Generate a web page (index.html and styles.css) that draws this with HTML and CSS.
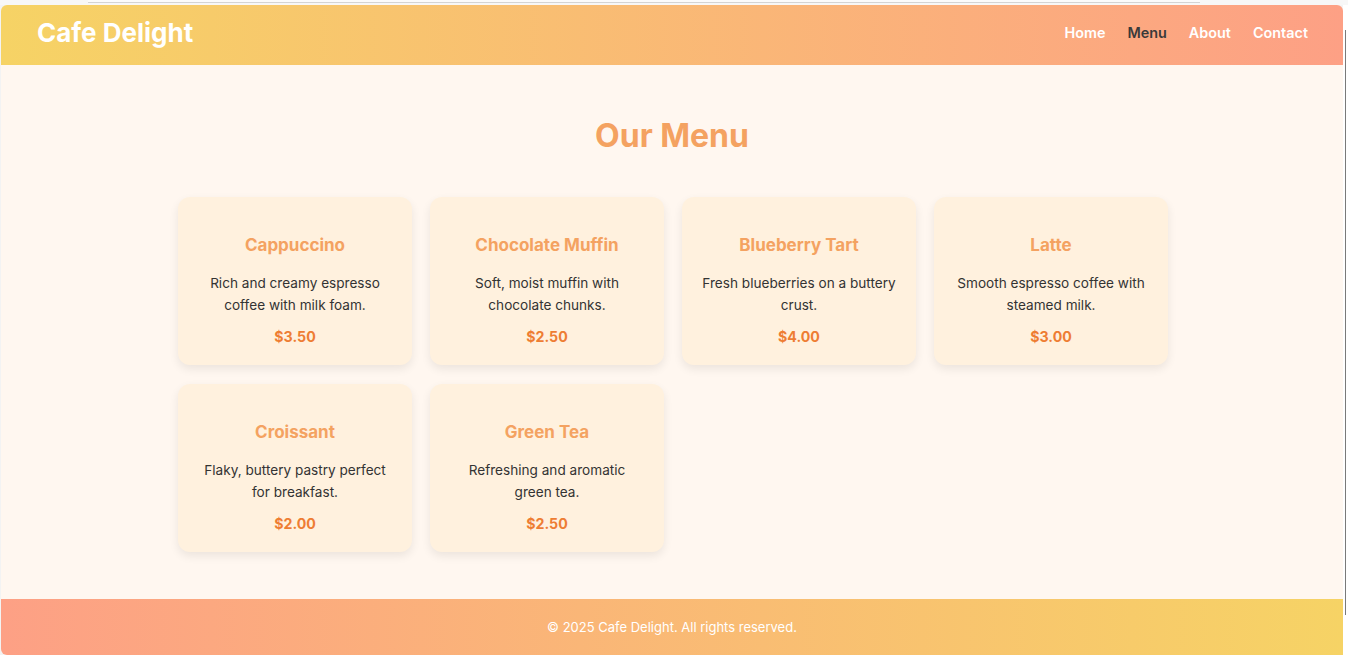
FILE: index.html
```html
<!DOCTYPE html>
<html lang="en">
<head>
<meta charset="utf-8">
<title>Cafe Delight</title>
<link rel="stylesheet" href="styles.css">
</head>
<body>
<div class="chrome">
  <div class="tab"></div>
</div>
<div class="window">
  <div class="frame">
    <header class="site-header">
      <div class="logo">Cafe Delight</div>
      <nav class="nav">
        <a href="#" class="nav-link">Home</a>
        <a href="#" class="nav-link active">Menu</a>
        <a href="#" class="nav-link">About</a>
        <a href="#" class="nav-link">Contact</a>
      </nav>
    </header>
    <main class="content">
      <h2 class="page-title">Our Menu</h2>
      <div class="menu-grid">
        <div class="card">
          <h3 class="card-title">Cappuccino</h3>
          <p class="card-desc">Rich and creamy espresso coffee with milk foam.</p>
          <div class="price">$3.50</div>
        </div>
        <div class="card">
          <h3 class="card-title">Chocolate Muffin</h3>
          <p class="card-desc">Soft, moist muffin with chocolate chunks.</p>
          <div class="price">$2.50</div>
        </div>
        <div class="card">
          <h3 class="card-title">Blueberry Tart</h3>
          <p class="card-desc">Fresh blueberries on a buttery crust.</p>
          <div class="price">$4.00</div>
        </div>
        <div class="card">
          <h3 class="card-title">Latte</h3>
          <p class="card-desc">Smooth espresso coffee with steamed milk.</p>
          <div class="price">$3.00</div>
        </div>
        <div class="card">
          <h3 class="card-title">Croissant</h3>
          <p class="card-desc">Flaky, buttery pastry perfect for breakfast.</p>
          <div class="price">$2.00</div>
        </div>
        <div class="card">
          <h3 class="card-title">Green Tea</h3>
          <p class="card-desc">Refreshing and aromatic green tea.</p>
          <div class="price">$2.50</div>
        </div>
      </div>
    </main>
    <footer class="site-footer">© 2025 Cafe Delight. All rights reserved.</footer>
  </div>
  <div class="scroll-edge"></div>
</div>
</body>
</html>
```

FILE: styles.css
```css
* { box-sizing: border-box; }
html, body { margin: 0; padding: 0; }
body {
  width: 1348px;
  height: 655px;
  overflow: hidden;
  background: #ffffff;
  font-family: Inter, "Noto Sans", sans-serif;
  display: flex;
  flex-direction: column;
}
.chrome {
  height: 5px;
  flex: none;
  background: #f7f7f7;
  position: relative;
}
.tab {
  position: absolute;
  left: 88px;
  top: 0;
  width: 1112px;
  height: 3px;
  border-bottom: 1px solid #d4d4d4;
  background: #fbfbfb;
}
.window {
  flex: 1;
  display: flex;
  padding-left: 1px;
  background: #f3f3f3;
}
.frame {
  width: 1342px;
  height: 650px;
  display: flex;
  flex-direction: column;
  border-radius: 6px 6px 0 6px;
  overflow: hidden;
  background: #fff7f0;
}
.scroll-edge {
  width: 5px;
  background: #ffffff;
  border-left: 2px solid #ffffff;
  position: relative;
}
.scroll-edge::after {
  content: "";
  position: absolute;
  left: 0;
  top: 25px;
  width: 1px;
  height: 585px;
  background: #7a7a7a;
}
.site-header {
  height: 60px;
  flex: none;
  display: flex;
  align-items: center;
  justify-content: space-between;
  padding: 0 35px 6px 36px;
  background: linear-gradient(90deg, #f6d365 0%, #fda085 100%);
}
.logo {
  color: #ffffff;
  font-size: 26px;
  font-weight: 700;
}
.nav {
  display: flex;
  gap: 22px;
}
.nav-link {
  color: #ffffff;
  text-decoration: none;
  font-size: 14.4px;
  font-weight: 600;
}
.nav-link.active { color: #3a3a3a; }
.content {
  flex: 1;
  padding-top: 51px;
}
.page-title {
  margin: 0 0 42px;
  text-align: center;
  font-size: 32px;
  line-height: 39px;
  font-weight: 700;
  color: #f4a261;
}
.menu-grid {
  display: grid;
  grid-template-columns: repeat(4, 234px);
  column-gap: 18px;
  row-gap: 19px;
  justify-content: center;
  padding-left: 2px;
}
.card {
  height: 168px;
  background: #fff1de;
  border-radius: 12px;
  box-shadow: 0 4px 10px rgba(0, 0, 0, 0.08);
  padding: 38px 19.5px 0;
  text-align: center;
}
.card-title {
  margin: 0;
  font-size: 17px;
  line-height: 20px;
  font-weight: 700;
  color: #f4a261;
}
.card-desc {
  margin: 17px 0 11px;
  font-size: 13.6px;
  line-height: 22px;
  color: #333333;
}
.price {
  font-size: 14.2px;
  line-height: 20px;
  font-weight: 700;
  color: #ee7d33;
}
.site-footer {
  height: 56px;
  flex: none;
  display: flex;
  align-items: center;
  justify-content: center;
  color: #ffffff;
  font-size: 13px;
  background: linear-gradient(90deg, #fda085 0%, #f6d365 100%);
}
```
